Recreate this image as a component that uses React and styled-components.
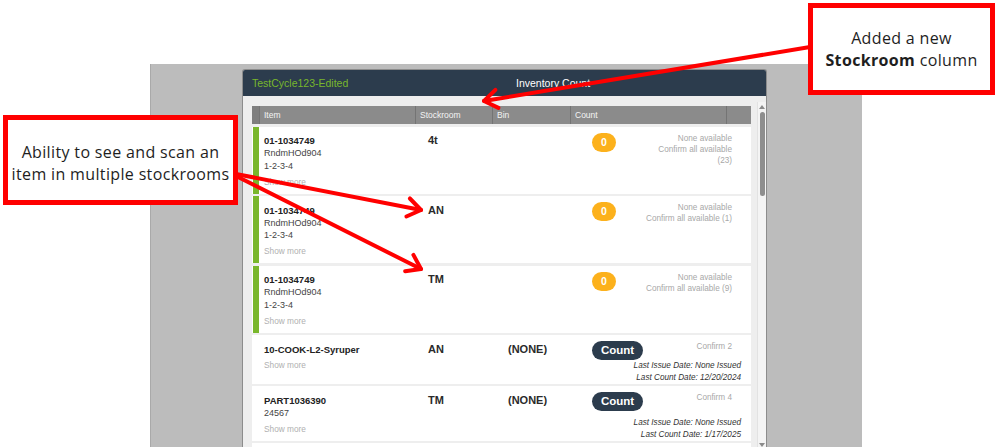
import styled, { createGlobalStyle } from "styled-components";

const GlobalStyle = createGlobalStyle`
  html, body {
    margin: 0;
    padding: 0;
    background: #ffffff;
  }
  body {
    font-family: "Liberation Sans", Arial, sans-serif;
  }
  * {
    box-sizing: border-box;
  }
`;

const Page = styled.div`
  position: relative;
  width: 997px;
  height: 447px;
  overflow: hidden;
  background: #ffffff;
  padding: 64px 0 0 150px;
`;

const Screen = styled.div`
  width: 712px;
  height: 383px;
  background: #bcbcbc;
  border-left: 1px solid #a9a9a9;
  padding: 5px 0 0 91px;
`;

const Panel = styled.div`
  width: 525px;
  height: 100%;
  background: #eeeeee;
  border: 1px solid #8c8c8c;
  border-bottom: none;
  border-radius: 3px 3px 0 0;
  display: flex;
  flex-direction: column;
  overflow: hidden;
`;

const PanelHeader = styled.div`
  height: 26px;
  flex-shrink: 0;
  background: #2c3c4d;
  display: flex;
  align-items: center;
  padding-left: 9px;
  font-size: 10.5px;
`;

const CycleTitle = styled.span`
  color: #79b72c;
  width: 264px;
`;

const PanelTitle = styled.span`
  color: #ffffff;
`;

const PanelBody = styled.div`
  flex: 1;
  display: flex;
  gap: 6px;
  padding: 10px 0 0 9px;
  min-height: 0;
`;

const Table = styled.div`
  width: 499px;
  display: flex;
  flex-direction: column;
  gap: 2.5px;
`;

const HeadRow = styled.div`
  display: grid;
  grid-template-columns: 7px 156px 77px 78px 156px 25px;
  height: 18px;
  background: #8b8b8b;
  flex-shrink: 0;
`;

const HeadCell = styled.div`
  border-left: ${(p) => (p.$first ? "none" : "1px solid #747474")};
  background: ${(p) => (p.$dark ? "#7e7e7e" : "transparent")};
  color: #f4f4f4;
  font-size: 8.5px;
  line-height: 18px;
  padding-left: 4px;
`;

const Row = styled.div`
  display: grid;
  grid-template-columns: 7px 156px 77px 78px 181px;
  min-height: ${(p) => p.$min || 0}px;
  background: #ffffff;
  flex-shrink: 0;
`;

const Accent = styled.div`
  background: ${(p) => (p.$on ? "#79b72c" : "transparent")};
  margin-left: 1px;
`;

const ItemCell = styled.div`
  padding: 7.5px 0 5px 5px;
  display: flex;
  flex-direction: column;
`;

const ItemName = styled.div`
  font-weight: bold;
  font-size: 9.5px;
  line-height: 13px;
  color: #222;
`;

const ItemLine = styled.div`
  font-size: 9px;
  line-height: 12.5px;
  color: #444;
`;

const ShowMore = styled.div`
  font-size: 8.3px;
  line-height: 14px;
  margin-top: 2.5px;
  color: #b0b0b0;
`;

const CodeCell = styled.div`
  padding: 6.5px 0 0 ${(p) => p.$indent}px;
  font-weight: bold;
  font-size: 11px;
  line-height: 14px;
  color: #2a2a2a;
`;

const CountCell = styled.div`
  display: flex;
  flex-direction: column;
  padding-top: ${(p) => (p.$badge ? 6 : 5.5)}px;
  align-self: stretch;
`;

const CountTop = styled.div`
  display: flex;
  justify-content: space-between;
  align-items: flex-start;
  padding: 0 19px 0 22px;
`;

const Badge = styled.div`
  width: 24px;
  height: 19px;
  border-radius: 10px;
  background: #fcb11c;
  color: #ffffff;
  font-weight: bold;
  font-size: 10.5px;
  line-height: 19px;
  text-align: center;
`;

const CountButton = styled.div`
  width: 51px;
  height: 19px;
  border-radius: 10px;
  background: #2c3c4d;
  color: #ffffff;
  font-weight: bold;
  font-size: 11.5px;
  line-height: 19px;
  text-align: center;
`;

const Info = styled.div`
  text-align: right;
  font-size: 8.2px;
  line-height: 11px;
  color: #a8a8a8;
`;

const Dates = styled.div`
  margin-top: auto;
  padding-right: 10px;
  text-align: right;
  font-style: italic;
  font-size: 8.2px;
  line-height: 12px;
  color: #333;
`;

const Scrollbar = styled.div`
  width: 9px;
  background: #f4f4f4;
  border-left: 1px solid #e2e2e2;
  margin-top: -4px;
  display: flex;
  flex-direction: column;
  align-items: center;
  padding-top: 3px;
`;

const ScrollArrow = styled.div`
  width: 0;
  height: 0;
  border-left: 3px solid transparent;
  border-right: 3px solid transparent;
  border-${(p) => (p.$down ? "top" : "bottom")}: 4px solid #8a8a8a;
`;

const Thumb = styled.div`
  width: 5px;
  height: 84px;
  margin-top: 3px;
  border-radius: 3px;
  background: #8e8e8e;
`;

const ScrollSpace = styled.div`
  flex: 1;
`;

const Callout = styled.div`
  position: absolute;
  left: ${(p) => p.$x}px;
  top: ${(p) => p.$y}px;
  width: ${(p) => p.$w}px;
  height: ${(p) => p.$h}px;
  padding-top: ${(p) => p.$pt || 0}px;
  border: 5px solid #ff0000;
  background: #ffffff;
  display: flex;
  flex-direction: column;
  align-items: center;
  justify-content: center;
  font-family: "Open Sans", "Liberation Sans", sans-serif;
  font-size: 16px;
  letter-spacing: 0.35px;
  line-height: 22px;
  color: #1e1e1e;
  text-align: center;
`;

const Arrows = styled.svg`
  position: absolute;
  left: 0;
  top: 0;
  pointer-events: none;
`;

const rows = [
  {
    accent: true,
    name: "01-1034749",
    lines: ["RndmHOd904", "1-2-3-4"],
    stock: "4t",
    info: ["None available", "Confirm all available", "(23)"],
  },
  {
    accent: true,
    name: "01-1034749",
    lines: ["RndmHOd904", "1-2-3-4"],
    stock: "AN",
    info: ["None available", "Confirm all available (1)"],
  },
  {
    accent: true,
    name: "01-1034749",
    lines: ["RndmHOd904", "1-2-3-4"],
    stock: "TM",
    info: ["None available", "Confirm all available (9)"],
  },
  {
    name: "10-COOK-L2-Syruper",
    lines: [],
    stock: "AN",
    bin: "(NONE)",
    info: ["Confirm 2"],
    dates: ["Last Issue Date: None Issued", "Last Count Date: 12/20/2024"],
  },
  {
    name: "PART1036390",
    lines: ["24567"],
    stock: "TM",
    bin: "(NONE)",
    info: ["Confirm 4"],
    dates: ["Last Issue Date: None Issued", "Last Count Date: 1/17/2025"],
  },
];

function InventoryRow({ row }) {
  const badge = !row.dates;
  return (
    <Row>
      <Accent $on={row.accent} />
      <ItemCell>
        <ItemName>{row.name}</ItemName>
        {row.lines.map((l) => (
          <ItemLine key={l}>{l}</ItemLine>
        ))}
        <ShowMore>Show more</ShowMore>
      </ItemCell>
      <CodeCell $indent={13}>{row.stock}</CodeCell>
      <CodeCell $indent={16}>{row.bin}</CodeCell>
      <CountCell $badge={badge}>
        <CountTop>
          {badge ? <Badge>0</Badge> : <CountButton>Count</CountButton>}
          <Info>
            {row.info.map((l) => (
              <div key={l}>{l}</div>
            ))}
          </Info>
        </CountTop>
        {row.dates && (
          <Dates>
            {row.dates.map((d) => (
              <div key={d}>{d}</div>
            ))}
          </Dates>
        )}
      </CountCell>
    </Row>
  );
}

function Arrow({ from, to }) {
  const [x1, y1] = from;
  const [x2, y2] = to;
  const back = Math.atan2(y1 - y2, x1 - x2);
  const spread = (35 * Math.PI) / 180;
  const len = 16;
  const a = [x2 + Math.cos(back + spread) * len, y2 + Math.sin(back + spread) * len];
  const b = [x2 + Math.cos(back - spread) * len, y2 + Math.sin(back - spread) * len];
  return (
    <g stroke="#ff0000" strokeWidth="4" fill="none" strokeLinecap="round" strokeLinejoin="round">
      <line x1={x1} y1={y1} x2={x2} y2={y2} />
      <polyline points={`${a[0]},${a[1]} ${x2},${y2} ${b[0]},${b[1]}`} />
    </g>
  );
}

export default function App() {
  return (
    <>
      <GlobalStyle />
      <Page>
        <Screen>
          <Panel>
            <PanelHeader>
              <CycleTitle>TestCycle123-Edited</CycleTitle>
              <PanelTitle>Inventory Count</PanelTitle>
            </PanelHeader>
            <PanelBody>
              <Table>
                <HeadRow>
                  <HeadCell $first $dark />
                  <HeadCell>Item</HeadCell>
                  <HeadCell>Stockroom</HeadCell>
                  <HeadCell>Bin</HeadCell>
                  <HeadCell>Count</HeadCell>
                  <HeadCell />
                </HeadRow>
                {rows.map((r, i) => (
                  <InventoryRow key={i} row={r} />
                ))}
                <Row $min={20} />
              </Table>
              <Scrollbar>
                <ScrollArrow />
                <Thumb />
                <ScrollSpace />
                <ScrollArrow $down />
              </Scrollbar>
            </PanelBody>
          </Panel>
        </Screen>

        <Arrows width="997" height="447" viewBox="0 0 997 447">
          <Arrow from={[810, 47]} to={[484, 101]} />
          <Arrow from={[236, 174]} to={[421, 210]} />
          <Arrow from={[236, 176]} to={[421, 269]} />
        </Arrows>

        <Callout $x={3} $y={115} $w={235} $h={90} $pt={5}>
          <div>Ability to see and scan an</div>
          <div>item in multiple stockrooms</div>
        </Callout>
        <Callout $x={808} $y={3} $w={187} $h={92}>
          <div>Added a new</div>
          <div>
            <b>Stockroom</b> column
          </div>
        </Callout>
      </Page>
    </>
  );
}
